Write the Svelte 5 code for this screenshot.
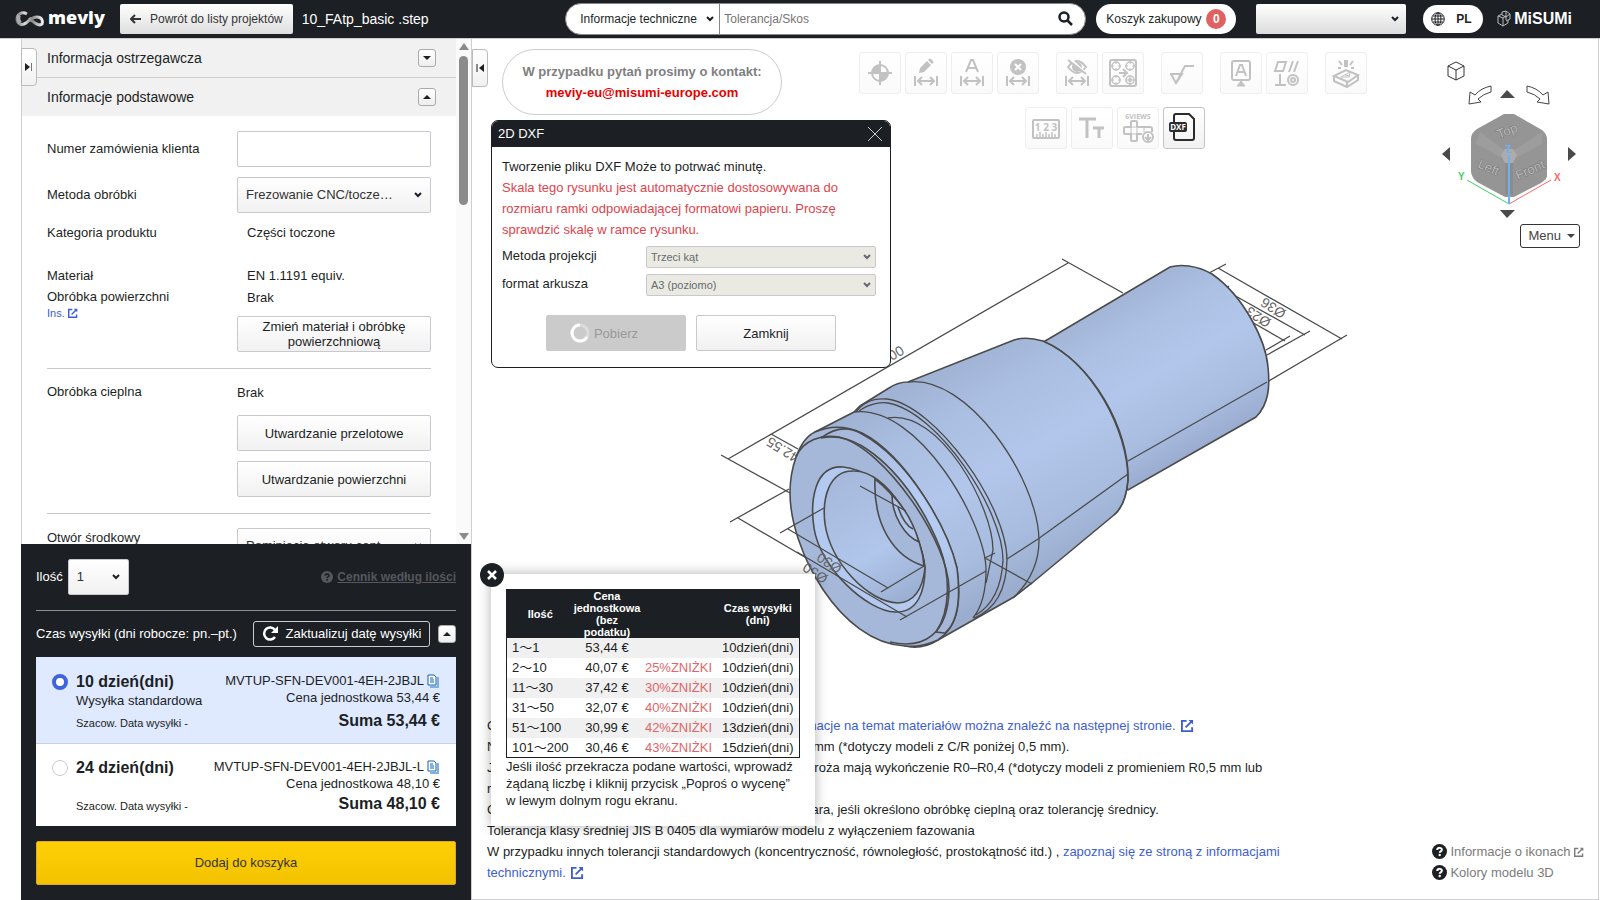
<script>
	let orderNumber = $state('');
	let method = $state('Frezowanie CNC/tocze…');
	let amount = $state('1');
	let selected = $state(0);
	let showDialog = $state(true);
	let showPrices = $state(true);

	const toolGroups = [
		['origin', 'pencil', 'letter', 'remove'],
		['hide', 'holes'],
		['rough'],
		['datum', 'geometric'],
		['engrave']
	];
	const toolGroups2 = ['ruler', 'text', 'views', 'dxf'];

	const toolNames = {
		origin: 'Punkt bazowy',
		pencil: 'Edytuj wymiar',
		letter: 'Opis wymiaru',
		remove: 'Usuń wymiar',
		hide: 'Ukryj wymiar',
		holes: 'Grupa otworów',
		rough: 'Chropowatość',
		datum: 'Baza',
		geometric: 'Tolerancja geometryczna',
		engrave: 'Grawerowanie',
		ruler: 'Jednostki',
		text: 'Rozmiar tekstu',
		views: '6 widoków',
		dxf: '2D DXF'
	};

	const offers = [
		{ days: '10 dzień(dni)', note: 'Wysyłka standardowa', code: 'MVTUP-SFN-DEV001-4EH-2JBJL', price: '53,44 €' },
		{ days: '24 dzień(dni)', note: '', code: 'MVTUP-SFN-DEV001-4EH-2JBJL-L', price: '48,10 €' }
	];

	const prices = [
		['1～1', '53,44 €', '', '10dzień(dni)'],
		['2～10', '40,07 €', '25%ZNIŻKI', '10dzień(dni)'],
		['11～30', '37,42 €', '30%ZNIŻKI', '10dzień(dni)'],
		['31～50', '32,07 €', '40%ZNIŻKI', '10dzień(dni)'],
		['51～100', '30,99 €', '42%ZNIŻKI', '13dzień(dni)'],
		['101～200', '30,46 €', '43%ZNIŻKI', '15dzień(dni)']
	];
</script>

{#snippet chevron()}
	<svg class="chevron" width="8" height="6" viewBox="0 0 8 6"><path d="M1 1l3 3 3-3" fill="none" stroke="currentColor" stroke-width="2" /></svg>
{/snippet}

{#snippet external(size)}
	<svg class="external" width={size} height={size} viewBox="0 0 14 14" fill="none" stroke="currentColor" stroke-width="2">
		<path d="M6 2H1v11h11V9M5 9l7-7" /><path d="M8 1h5v5z" fill="currentColor" stroke="none" />
	</svg>
{/snippet}

{#snippet help()}
	<svg class="help" width="15" height="15" viewBox="0 0 15 15">
		<circle cx="7.5" cy="7.5" r="7.5" fill="currentColor" />
		<path class="mark" d="M5.2 6c0-3 4.7-2.6 4.7-.2 0 1.6-2.2 1.5-2.2 3" fill="none" stroke-width="2" />
		<circle class="dot" cx="7.7" cy="11" r="1.2" />
	</svg>
{/snippet}

{#snippet span()}
	<path d="M10 24v10M32 24v10M14 29h14" /><path d="M17 25l-4 4 4 4M25 25l4 4-4 4" />
{/snippet}

{#snippet icon(name)}
	<svg width="40" height="40" viewBox="1 1 40 40" fill="none" stroke="currentColor" stroke-width="2">
		{#if name === 'origin'}
			<circle cx="21" cy="21" r="8" /><path d="M21 9v24M9 21h24" />
			<path d="M21 21V13a8 8 0 0 0-8 8zM21 21v8a8 8 0 0 0 8-8z" fill="currentColor" stroke="none" />
		{:else if name === 'pencil'}
			{@render span()}
			<path d="M14 21l1-5 7-7 4 4-7 7zM23 8l1-1q1-1 2 0l2 2q1 1 0 2l-1 1z" fill="currentColor" stroke="none" />
		{:else if name === 'letter'}
			{@render span()}
			<path d="M15 20l5-12h2l5 12M17 16h8" />
		{:else if name === 'remove'}
			{@render span()}
			<circle cx="21" cy="15" r="8" fill="currentColor" stroke="none" />
			<path d="M18 12l6 6M24 12l-6 6" stroke="#fff" />
		{:else if name === 'hide'}
			{@render span()}
			<path d="M12 15q9-12 18 0-9 12-18 0z" /><circle cx="21" cy="15" r="4" fill="currentColor" />
			<path d="M13 6l17 16" stroke="#fff" stroke-width="3" /><path d="M12 8l18 14" />
		{:else if name === 'holes'}
			<rect x="8" y="8" width="26" height="26" rx="2" />
			{#each [[14, 14], [28, 14], [14, 28], [28, 28]] as [cx, cy]}
				<circle {cx} {cy} r="4" stroke-width="1.5" /><path d="M{cx - 5} {cy}h3m4 0h3M{cx} {cy - 5}v3m0 4v3" stroke-width="1" />
			{/each}
			<circle cx="28" cy="28" r="1" />
			<path d="M17 21h7M21 17l4 4-4 4" />
		{:else if name === 'rough'}
			<path d="M9 22h12l-6 9-5-9M15 31l9-17h9" />
		{:else if name === 'datum'}
			<rect x="12" y="9" width="18" height="19" rx="2" /><path d="M16 24l4-11h2l4 11M18 20h6" />
			<path d="M21 28v3M21 29l4 5h-8z" fill="currentColor" stroke-width="1" />
		{:else if name === 'geometric'}
			<path d="M12 10h8l-3 9h-8zM27 9l-4 11M32 9l-4 11M14 22v11M9 33h11" />
			<circle cx="27" cy="28" r="5" /><circle cx="27" cy="28" r="2" />
		{:else if name === 'engrave'}
			<path d="M9 24l12-6 12 5-10 7zM9 24v5l13 6 11-7v-5M22 30v5" />
			<path d="M16 25l9-5-1 5zM20 23l5 1" stroke-width="1" />
			<path d="M21 8v7" stroke-width="4" /><path d="M14 9l3 4M28 9l-3 4M13 16h3M26 16h3" />
		{:else if name === 'ruler'}
			<rect x="8" y="13" width="26" height="18" rx="1" />
			<path d="M12 30v-3M15 30v-5M18 30v-3M21 30v-5M24 30v-3M27 30v-5M30 30v-3" stroke-width="1.5" />
			<text x="21" y="24" font-size="10" text-anchor="middle">1 2 3</text>
		{:else if name === 'text'}
			<path d="M8 12h17M16 12v19" stroke-width="3" /><path d="M22 21h11M28 21v10" stroke-width="3" />
		{:else if name === 'views'}
			<text x="21" y="12" font-size="7" text-anchor="middle">6VIEWS</text>
			<path d="M20 20v-5q0-1-1-1h-4q-1 0-1 1v5H8q-1 0-1 1v5q0 1 1 1h6v6q0 1 1 1h4q1 0 1-1v-6h5M20 20h13q2 0 2 2v3" />
			<path d="M14 20v7M20 20v7M14 20h6M14 27h6M27 21v4" stroke-width="1" />
			<circle cx="31" cy="30" r="5" fill="#fff" /><path d="M31 27v5M28 30l3 3 3-3" />
		{:else}
			<path d="M11 15V9q0-2 2-2h13l5 5v19q0 2-2 2H13q-2 0-2-2v-6" />
			<rect x="6" y="15" width="18" height="10" rx="2" fill="currentColor" stroke="none" />
			<text x="15" y="23" font-size="8" text-anchor="middle" class="inverse">DXF</text>
		{/if}
	</svg>
{/snippet}

<div class="page">
	<header>
		<a class="logo" href="/" aria-label="meviy">
			<svg width="29" height="16" viewBox="0 0 29 16" fill="none">
				<defs>
					<linearGradient id="loop"><stop offset="0" stop-color="#777" /><stop offset=".3" stop-color="#ddd" /><stop offset=".6" stop-color="#888" /><stop offset="1" stop-color="#eee" /></linearGradient>
				</defs>
				<path d="M12 3C7 0 2 3 2 8s5 7 9 4 6-6 11-6 6 4 5 7c-2 2-7 0-13-6" stroke="url(#loop)" stroke-width="3" />
				<path d="M4 4q-2 4 1 8" stroke="#aaa" stroke-width="4" />
			</svg>
			<span>meviy</span>
		</a>
		<button class="back">
			<svg width="12" height="10" viewBox="0 0 12 10" fill="none" stroke="currentColor" stroke-width="2"><path d="M5 1L1 5l4 4M1 5h10" /></svg>
			Powrót do listy projektów
		</button>
		<span class="file">10_FAtp_basic .step</span>
		<div class="search">
			<span class="select-box">
				<select aria-label="Zakres wyszukiwania"><option>Informacje techniczne</option></select>
				{@render chevron()}
			</span>
			<input type="text" placeholder="Tolerancja/Skos" aria-label="Szukaj" />
			<button aria-label="Szukaj">
				<svg width="15" height="15" viewBox="0 0 15 15" fill="none" stroke="currentColor" stroke-width="2.5"><circle cx="6" cy="6" r="4.5" /><path d="M9 9l5 5" /></svg>
			</button>
		</div>
		<button class="cart">Koszyk zakupowy <b>0</b></button>
		<span class="select-box account">
			<select aria-label="Konto"><option></option></select>
			{@render chevron()}
		</span>
		<button class="lang">
			<svg width="14" height="14" viewBox="0 0 14 14" fill="none" stroke="currentColor"><circle cx="7" cy="7" r="6.3" /><ellipse cx="7" cy="7" rx="3" ry="6.3" /><path d="M7 1v12M1 7h12M2 4h10M2 10h10" /></svg>
			PL
		</button>
		<a class="misumi" href="/misumi">
			<svg width="14" height="17" viewBox="0 0 14 17" fill="none" stroke="#bbb"><path d="M1 6l5 2v8l-5-3zM6 8l3-2M6 16l5-3v-3M5 5V2l4-1v9M9 1l4 3v5l-4 2M5 5l4 2 4-3M1 6l4-2" /></svg>
			<span>MiSUMi</span>
		</a>
	</header>

	<main>
		<aside>
			<div class="panel">
				<button class="fold" aria-label="Zwiń panel">
					<svg width="8" height="8" viewBox="0 0 8 8"><path d="M0 0l5 4-5 4z" fill="currentColor" /><path d="M6.5 0v8" stroke="#777" /></svg>
				</button>
				<div class="scroll">
					<section class="heading">
						<h2>Informacja ostrzegawcza</h2>
						<button class="toggle" aria-label="Rozwiń"><i class="tri down"></i></button>
					</section>
					<section class="heading">
						<h2>Informacje podstawowe</h2>
						<button class="toggle" aria-label="Zwiń"><i class="tri up"></i></button>
					</section>
					<div class="form">
						<div class="row">
							<label for="order">Numer zamówienia klienta</label>
							<input id="order" type="text" bind:value={orderNumber} />
						</div>
						<div class="row">
							<label for="method">Metoda obróbki</label>
							<span class="select-box field">
								<select id="method" bind:value={method}><option>Frezowanie CNC/tocze…</option></select>
								{@render chevron()}
							</span>
						</div>
						<div class="row text"><span>Kategoria produktu</span><span class="value">Części toczone</span></div>
						<div class="row material">
							<div>
								<p>Materiał</p>
								<p>Obróbka powierzchni</p>
								<a href="/ins">Ins. {@render external(10)}</a>
							</div>
							<div>
								<p class="value">EN 1.1191 equiv.</p>
								<p class="value">Brak</p>
								<button class="btn">Zmień materiał i obróbkę powierzchniową</button>
							</div>
						</div>
						<hr />
						<div class="row heat">
							<p>Obróbka cieplna</p>
							<div>
								<p>Brak</p>
								<button class="btn">Utwardzanie przelotowe</button>
								<button class="btn">Utwardzanie powierzchni</button>
							</div>
						</div>
						<hr />
						<div class="row center-hole">
							<label for="hole">Otwór środkowy</label>
							<span class="select-box field">
								<select id="hole"><option>Pominięcie otworu cent…</option></select>
								{@render chevron()}
							</span>
						</div>
					</div>
				</div>
				<div class="bar">
					<i class="tri up"></i>
					<i class="thumb"></i>
					<i class="tri down"></i>
				</div>
			</div>

			<div class="order">
				<div class="amount">
					<label for="amount">Ilość</label>
					<span class="select-box field">
						<select id="amount" bind:value={amount}><option>1</option><option>2</option></select>
						{@render chevron()}
					</span>
					<a href="/cennik">{@render help()}<u>Cennik według ilości</u></a>
				</div>
				<div class="shipping">
					<span>Czas wysyłki (dni robocze: pn.–pt.)</span>
					<button class="refresh">
						<svg width="17" height="16" viewBox="0 0 17 16" fill="none" stroke="currentColor" stroke-width="2.5"><path d="M13 11a6 6 0 1 1 0-7" /><path d="M16 0v7H9z" fill="currentColor" stroke="none" /></svg>
						Zaktualizuj datę wysyłki
					</button>
					<button class="toggle" aria-label="Zwiń"><i class="tri up"></i></button>
				</div>
				<div class="offers">
					{#each offers as offer, i}
						<label class="offer" class:active={selected === i}>
							<input type="radio" name="offer" value={i} bind:group={selected} />
							<span class="when">
								<b>{offer.days}</b>
								<span>{offer.note}</span>
								<small>Szacow. Data wysyłki -</small>
							</span>
							<span class="cost">
								<span>{offer.code}
									<svg class="copy" width="13" height="14" viewBox="0 0 13 14" fill="none"><path d="M3 13h8V3" stroke="#7fb0e0" stroke-width="2" /><path d="M1 1h6l2 2v8H1z" fill="#fff" stroke="#0a62b5" /><path d="M3 4h3M3 6h4M3 8h4" stroke="#0a62b5" /></svg>
								</span>
								<span>Cena jednostkowa {offer.price}</span>
								<b>Suma {offer.price}</b>
							</span>
						</label>
					{/each}
				</div>
				<button class="add">Dodaj do koszyka</button>
			</div>
		</aside>

		<div class="viewer">
			<svg class="model" width="680" height="420" viewBox="700 240 680 420" role="img" aria-label="Model 3D">
				<defs>
					<linearGradient id="shaft" gradientUnits="userSpaceOnUse" x1="1106" y1="304" x2="1192" y2="453">
						<stop offset="0" stop-color="#a2b5d7" /><stop offset=".22" stop-color="#abc0e3" /><stop offset=".5" stop-color="#b1c6ea" /><stop offset=".8" stop-color="#a9bde0" /><stop offset="1" stop-color="#9aadd0" />
					</linearGradient>
					<linearGradient id="body" gradientUnits="userSpaceOnUse" x1="930" y1="375" x2="1040" y2="575">
						<stop offset="0" stop-color="#a0b3d5" /><stop offset=".2" stop-color="#aabee1" /><stop offset=".5" stop-color="#b1c6ea" /><stop offset=".8" stop-color="#a8bcdf" /><stop offset="1" stop-color="#9aadce" />
					</linearGradient>
					<linearGradient id="bore" gradientUnits="userSpaceOnUse" x1="835" y1="480" x2="905" y2="600">
						<stop offset="0" stop-color="#a6b9dc" /><stop offset=".6" stop-color="#b0c6ea" /><stop offset="1" stop-color="#9bafd2" />
					</linearGradient>
					<linearGradient id="chamfer" gradientUnits="userSpaceOnUse" x1="840" y1="430" x2="940" y2="600">
						<stop offset="0" stop-color="#a5b8da" /><stop offset=".5" stop-color="#b8cdf4" /><stop offset=".8" stop-color="#b4c9ee" /><stop offset="1" stop-color="#a5b8da" />
					</linearGradient>
				</defs>
				<g class="dims">
					<path d="M1062 259l61 34M1068 263L728 459M721 455l69 38M771 434l27 15" />
					<path d="M1209 273l17-9M1218 268l124 71M1347 335l-80 47M1229 286l-4 3M1232 294l73 41M1310 331l-43 24M1250 321l35 20M1290 336l-24 14" />
					<path d="M730 522l59-33M738 518l70 41" />
					<text transform="translate(800 455) rotate(212)">42.55</text>
					<text transform="translate(885 365) rotate(-30)">100</text>
					<text transform="translate(1287 311) rotate(212)">Ø36</text>
					<text transform="translate(1272 320) rotate(212)">Ø23</text>
				</g>
				<g class="solid">
					<path fill="url(#shaft)" d="M1030 350L1170 267C1180 264 1196 265 1212 274C1245 297 1266 342 1268 367C1270 386 1269 404 1256 417L1128 490z" />
					<path fill="url(#body)" d="M815 432L854 412L860 406L889 388Q898 382 908 382L1014 340Q1026 336 1043 341C1092 362 1128 430 1128 480Q1126 505 1114 515L1032 583L1014 597L938 640Q922 650 905 646L815 460z" />
					<path fill="#a5b8da" d="M815 432C798 440 790 470 790 493C790 550 840 643 905 646Q920 648 938 640C960 625 961 598 957 568C946 525 905 455 862 433Q838 422 815 432z" />
					<path fill="url(#chamfer)" stroke="none" d="M862 434C910 460 948 530 957 568C961 600 958 622 945 633L936 632C951 610 950 575 940 548C925 510 898 468 862 446Q842 434 821 438Q842 422 862 434z" />
					<path fill="none" d="M796 457C803 440 822 434 839 437C885 448 950 544 949 590C948 633 925 650 890 642" />
					<path fill="#b4c9ef" d="M843 467C814 465 810 502 814 528C820 568 867 611 895 612C919 613 925 589 925 568C922 531 884 470 843 467z" />
					<path fill="url(#bore)" d="M854 471C828 470 822 500 825 524C831 563 868 602 898 603C917 602 923 586 925 568C920 528 888 471 854 471z" />
					<path fill="#a5b8da" d="M875 479C873 525 894 557 924 566C922 535 900 498 875 479z" />
					<path fill="#b0c5e9" d="M892 495C892 516 905 536 919 542C913 521 902 505 892 495z" />
					<path fill="none" d="M898 507Q904 525 913 529" />
				</g>
				<g class="edges">
					<path d="M908 382C967 374 1038 478 1039 540Q1039 573 1014 597" />
					<path d="M1043 341C1092 362 1130 430 1128 480Q1126 505 1114 515" />
					<path d="M856 412C864 401 876 398 887 399C935 405 1007 505 1007 560Q1006 605 974 618" />
					<path d="M859 411C870 403 882 402 888 403C938 412 1003 510 1003 560Q1001 600 976 615" />
					<path d="M888 418C940 409 993 507 993 550L986 583" />
					<path d="M854 412C919 404 986 524 986 570Q986 602 973 618" />
				</g>
				<g class="dims">
					<path d="M1267 382L1128 461M1128 474L1038 539L1007 559M995 553l-10 5M985 558l47 26M986 571l-86 49M797 552l110 65M780 533l44-25M788 529l100 59M881 592l43-26M860 486l46 25" />
					<text transform="translate(843 566) rotate(212)">Ø30</text>
					<text transform="translate(829 576) rotate(212)">Ø50</text>
				</g>
			</svg>

			<div class="top">
				<button class="fold" aria-label="Rozwiń panel">
					<svg width="8" height="8" viewBox="0 0 8 8"><path d="M8 0L3 4l5 4z" fill="currentColor" /><path d="M1 0v8" stroke="currentColor" /></svg>
				</button>
				<div class="contact">
					W przypadku pytań prosimy o kontakt:
					<a href="mailto:meviy-eu@misumi-europe.com">meviy-eu@misumi-europe.com</a>
				</div>
				<div class="tools">
					<div class="tool-row">
						{#each toolGroups as group}
							<div class="group">
								{#each group as name}
									<button class="tool" disabled aria-label={toolNames[name]}>{@render icon(name)}</button>
								{/each}
							</div>
						{/each}
					</div>
					<div class="group second">
						{#each toolGroups2 as name}
							<button class="tool" disabled={name !== 'dxf'} aria-label={toolNames[name]} onclick={() => (showDialog = true)}>{@render icon(name)}</button>
						{/each}
					</div>
				</div>
				<div class="view">
					<svg width="144" height="164" viewBox="1436 58 144 164" fill="none" role="img" aria-label="Orientacja widoku">
						<path d="M1456 62l8 4v10l-8 4-8-4V66zM1448 66l8 4 8-4M1456 70v10" stroke="#333" />
						<path d="M1491 86q-10 2-16 9l-5-3-1 12 12-2-3-3q5-5 13-7zM1527 86q10 2 16 9l5-3 1 12-12-2 3-3q-5-5-13-7z" stroke="#444" />
						<path d="M1500 98l7-8 8 8zM1500 210l7 8 8-8zM1450 147l-8 7 8 7zM1568 147l8 7-8 7z" fill="#4a4a4a" />
						<path d="M1504 114h10l28 16q5 4 5 9v37q0 3-6 7l-27 14h-9l-28-15q-5-4-6-10v-33q0-6 6-10z" fill="#959595" />
						<path d="M1480 132l24 18-2 8-26-14zM1542 132l-28 18 2 8 26-14z" fill="#9d9d9d" />
						<path d="M1505 162h8v33h-8z" fill="#8c8c8c" /><path d="M1505 149h8l4 6-4 8h-8l-4-8z" fill="#acacac" />
						<g class="faces">
							<text transform="translate(1499 139) rotate(-22)">Top</text>
							<text transform="translate(1477 167) rotate(24)">Left</text>
							<text transform="translate(1518 180) rotate(-24)">Front</text>
						</g>
						<path d="M1509 204l-42-24" stroke="#3fcf62" /><path d="M1509 204l42-24" stroke="#f66" />
						<path d="M1509 204v-49" stroke="#6fb0f3" stroke-width="2" />
						<g class="axes">
							<text x="1505" y="153" fill="#6fb0f3">Z</text>
							<text x="1458" y="180" fill="#3fcf62">Y</text>
							<text x="1554" y="181" fill="#f66">X</text>
						</g>
					</svg>
					<button class="menu">Menu <i class="tri down"></i></button>
				</div>
			</div>

			{#if showDialog}
				<div class="dialog" role="dialog" aria-label="2D DXF">
					<div class="dialog-head">
						2D DXF
						<button aria-label="Zamknij okno" onclick={() => (showDialog = false)}>
							<svg width="16" height="16" viewBox="0 0 16 16" stroke="currentColor"><path d="M1 1l14 14M15 1L1 15" /></svg>
						</button>
					</div>
					<div class="dialog-body">
						<p>Tworzenie pliku DXF Może to potrwać minutę.</p>
						<p class="warn">Skala tego rysunku jest automatycznie dostosowywana do rozmiaru ramki odpowiadającej formatowi papieru. Proszę sprawdzić skalę w ramce rysunku.</p>
						<div class="option">
							<label for="projection">Metoda projekcji</label>
							<span class="select-box"><select id="projection" disabled><option>Trzeci kąt</option></select>{@render chevron()}</span>
						</div>
						<div class="option">
							<label for="sheet">format arkusza</label>
							<span class="select-box"><select id="sheet" disabled><option>A3 (poziomo)</option></select>{@render chevron()}</span>
						</div>
						<div class="actions">
							<button class="btn" disabled>
								<svg width="20" height="20" viewBox="0 0 20 20" fill="none" stroke-width="3"><circle cx="10" cy="10" r="8" stroke="#dcdcdc" /><path d="M10 2a8 8 0 1 0 7 12" stroke="#fff" /></svg>
								Pobierz
							</button>
							<button class="btn" onclick={() => (showDialog = false)}>Zamknij</button>
						</div>
					</div>
				</div>
			{/if}

			{#if showPrices}
				<div class="prices">
					<button class="close" aria-label="Zamknij cennik" onclick={() => (showPrices = false)}>
						<svg width="10" height="10" viewBox="0 0 10 10" stroke="currentColor" stroke-width="2.5"><path d="M1 1l8 8M9 1L1 9" /></svg>
					</button>
					<table>
						<thead>
							<tr><th>Ilość</th><th>Cena jednostkowa (bez podatku)</th><th></th><th>Czas wysyłki (dni)</th></tr>
						</thead>
						<tbody>
							{#each prices as [range, price, discount, time]}
								<tr><td>{range}</td><td>{price}</td><td class="discount">{discount}</td><td>{time}</td></tr>
							{/each}
						</tbody>
					</table>
					<p>Jeśli ilość przekracza podane wartości, wprowadź żądaną liczbę i kliknij przycisk „Poproś o wycenę” w lewym dolnym rogu ekranu.</p>
				</div>
			{/if}

			<div class="bottom">
				<div class="notes">
					<p>Gatunek materiału zgodnie z normą. Szczegółowe <a href="/materialy">informacje na temat materiałów można znaleźć na następnej stronie. {@render external(13)}</a></p>
					<p>Nieokreślone krawędzie tworzą fazowanie C0,1 do C0,5 mm (*dotyczy modeli z C/R poniżej 0,5 mm).</p>
					<p>Jeśli nie określono inaczej, krawędzie konturowe oraz naroża mają wykończenie R0–R0,4 (*dotyczy modeli z promieniem R0,5 mm lub równym).</p>
					<p>Gwint wewnętrzny może też wymagać ponownego wymiara, jeśli określono obróbkę cieplną oraz tolerancję średnicy.</p>
					<p>Tolerancja klasy średniej JIS B 0405 dla wymiarów modelu z wyłączeniem fazowania</p>
					<p>W przypadku innych tolerancji standardowych (koncentryczność, równoległość, prostokątność itd.) , <a href="/tolerancje">zapoznaj się ze stroną z informacjami technicznymi. {@render external(13)}</a></p>
				</div>
				<div class="links">
					<a href="/ikony">{@render help()}Informacje o ikonach {@render external(10)}</a>
					<a href="/kolory">{@render help()}Kolory modelu 3D</a>
				</div>
			</div>
		</div>
	</main>
</div>

<style>
	:global(body) {
		margin: 0;
	}

	.page {
		display: flex;
		flex-direction: column;
		height: 100vh;
		overflow: hidden;
		background: #fff;
		color: #1c1f24;
		font: 13px/20px 'Liberation Sans', Arial, 'Noto Sans CJK JP', sans-serif;
	}

	.page * {
		box-sizing: border-box;
	}

	button,
	input,
	select {
		margin: 0;
		padding: 0;
		border: 0;
		background: none;
		color: inherit;
		font: inherit;
	}

	select {
		appearance: none;
		width: 100%;
		height: 100%;
		opacity: 1;
	}

	p,
	h2 {
		margin: 0;
	}

	a {
		color: #3e5ecf;
		text-decoration: none;
	}

	svg {
		flex: none;
	}

	.select-box {
		position: relative;
		display: flex;
	}

	.chevron {
		position: absolute;
		right: 8px;
		top: calc(50% - 3px);
		pointer-events: none;
	}

	.tri {
		flex: none;
		border: 0 solid transparent;
		border-width: 0 4px;
	}

	.tri.up {
		border-bottom: 4px solid currentColor;
	}

	.tri.down {
		border-top: 4px solid currentColor;
	}

	/* header */
	header {
		display: flex;
		align-items: center;
		flex: none;
		height: 39px;
		padding: 0 28px 1px 15px;
		background: #1c1f24;
		border-bottom: 1px solid #cdcdd2;
		color: #fff;
		font-size: 12px;
	}

	.logo {
		display: flex;
		align-items: center;
		gap: 4px;
		width: 105px;
		color: #fff;
		font: 800 18px/24px 'Open Sans', sans-serif;
	}

	.logo span {
		margin-top: -4px;
	}

	.back {
		display: flex;
		align-items: center;
		gap: 8px;
		height: 30px;
		padding: 0 10px;
		border-radius: 2px;
		background: linear-gradient(#fff, #dedede);
		color: #333;
		white-space: nowrap;
	}

	.file {
		margin-left: 9px;
		font-size: 14px;
		white-space: nowrap;
	}

	.search {
		display: flex;
		align-items: center;
		width: 521px;
		height: 32px;
		margin-left: auto;
		border: 1px solid #888;
		border-radius: 16px;
		background: #fff;
		color: #1c1f24;
	}

	.search .select-box {
		width: 154px;
		height: 30px;
		padding-left: 14px;
		border-right: 1px solid #888;
	}

	.search .chevron {
		right: 5px;
	}

	.search input {
		flex: 1;
		height: 28px;
		padding-left: 4px;
		outline: 0;
	}

	.search input::placeholder {
		color: #757575;
	}

	.search button {
		display: flex;
		margin-right: 12px;
	}

	.cart {
		display: flex;
		align-items: center;
		justify-content: space-between;
		width: 140px;
		height: 30px;
		margin-left: 10px;
		padding: 0 10px;
		border-radius: 15px;
		background: #fff;
		color: #1c1f24;
	}

	.cart b {
		width: 20px;
		border-radius: 10px;
		background: #df6161;
		color: #fff;
	}

	.account {
		width: 150px;
		height: 30px;
		margin-left: 20px;
		border-radius: 2px;
		background: linear-gradient(#fff, #dcdcdc);
		color: #1c1f24;
	}

	.account .chevron {
		right: 7px;
	}

	.lang {
		display: flex;
		align-items: center;
		gap: 11px;
		width: 60px;
		height: 28px;
		margin-left: 17px;
		padding-left: 8px;
		border-radius: 14px;
		background: #fff;
		color: #1c1f24;
		font-weight: bold;
	}

	.misumi {
		display: flex;
		align-items: center;
		gap: 3px;
		margin-left: 14px;
		color: #fff;
		font: bold 16px/20px 'Liberation Sans', Arial, sans-serif;
	}

	main {
		display: flex;
		flex: 1;
		min-height: 0;
	}

	/* left column */
	aside {
		display: flex;
		flex-direction: column;
		flex: none;
		width: 451px;
		margin-left: 21px;
		border-right: 1px solid #cdcdd2;
	}

	.panel {
		position: relative;
		display: flex;
		flex: 1;
		min-height: 0;
		border-left: 1px solid #cdcdd2;
	}

	.fold {
		position: absolute;
		z-index: 1;
		top: 9px;
		left: -1px;
		display: flex;
		align-items: center;
		justify-content: center;
		width: 16px;
		height: 38px;
		border: 1px solid #bbb;
		border-radius: 0 4px 4px 0;
		background: linear-gradient(#fff, #f1f1f1);
	}

	.scroll {
		flex: 1;
		overflow: hidden;
	}

	.heading {
		display: flex;
		align-items: center;
		justify-content: space-between;
		height: 39px;
		padding: 0 20px 0 25px;
		border-bottom: 1px solid #cdcdcd;
		background: #f1f1f1;
	}

	.heading + .heading {
		height: 38px;
		border: 0;
	}

	h2 {
		font-size: 14px;
		font-weight: normal;
	}

	.toggle {
		display: flex;
		align-items: center;
		justify-content: center;
		width: 18px;
		height: 18px;
		border: 1px solid #aaa;
		border-radius: 3px;
		background: linear-gradient(#fff, #eee);
		color: #1c1f24;
	}

	.form {
		padding: 15px 25px 0;
	}

	.row {
		display: flex;
		align-items: center;
		justify-content: space-between;
		margin-bottom: 10px;
	}

	.row > :last-child {
		width: 194px;
	}

	.row input,
	.field,
	.btn {
		height: 36px;
		border: 1px solid #c8c8ce;
		border-radius: 2px;
		background: #fff;
	}

	.field,
	.btn {
		background: linear-gradient(#fff, #f1f1f1);
	}

	.field select {
		padding: 0 8px;
		color: #333;
	}

	.value {
		padding-left: 10px;
	}

	.row.text {
		margin-bottom: 22px;
	}

	.row.material,
	.row.heat {
		align-items: flex-start;
		margin: 0;
	}

	.row p {
		line-height: 21px;
	}

	.row p.value {
		line-height: 22px;
	}

	.material a {
		display: block;
		font-size: 11px;
		line-height: 12px;
	}

	.btn {
		display: block;
		width: 100%;
		line-height: 15px;
	}

	.material .btn {
		margin-top: 7px;
	}

	hr {
		height: 1px;
		margin: 16px 0 12px;
		border: 0;
		background: #c8c8c8;
	}

	.heat div p {
		line-height: 24px;
	}

	.heat .btn {
		margin-top: 10px;
	}

	.center-hole {
		align-items: flex-start;
		padding-top: 2px;
	}

	.bar {
		display: flex;
		flex-direction: column;
		align-items: center;
		width: 15px;
		padding: 4px 0;
		background: #fafafa;
		color: #8b8b8b;
	}

	.bar .tri {
		border-width: 0 5px;
	}

	.bar .tri.up {
		border-bottom-width: 7px;
	}

	.bar .tri.down {
		margin-top: auto;
		border-top-width: 7px;
	}

	.thumb {
		width: 9px;
		height: 149px;
		margin-top: 6px;
		border-radius: 5px;
		background: #8b8b8b;
	}

	.order {
		flex: none;
		padding: 15px;
		background: #1c1f24;
		color: #fff;
	}

	.amount {
		display: flex;
		align-items: center;
		gap: 5px;
		height: 52px;
		padding-bottom: 16px;
		border-bottom: 1px solid #8e8f92;
	}

	.amount .field {
		width: 61px;
		color: #1c1f24;
	}

	.amount a {
		display: flex;
		align-items: center;
		gap: 4px;
		margin-left: auto;
		color: #55585c;
		font-size: 12px;
		font-weight: bold;
	}

	.help {
		vertical-align: middle;
	}

	.help .mark {
		stroke: #fff;
	}

	.help .dot {
		fill: #fff;
	}

	.amount .mark {
		stroke: #1c1f24;
	}

	.amount .dot {
		fill: #1c1f24;
	}

	.amount .help {
		width: 12px;
		height: 12px;
	}

	.shipping {
		display: flex;
		align-items: center;
		justify-content: space-between;
		height: 46px;
	}

	.refresh {
		display: flex;
		align-items: center;
		gap: 7px;
		height: 26px;
		margin-left: 8px;
		padding: 0 8px;
		border: 1px solid #ccc;
		border-radius: 3px;
	}

	.offer {
		display: flex;
		height: 82px;
		padding: 14px 16px 0 16px;
		background: #fff;
		color: #1c1f24;
	}

	.offer.active {
		height: 87px;
		padding-top: 15px;
		border-bottom: 1px solid #cdd0d8;
		background: #dfe9ff;
	}

	.offer input {
		appearance: none;
		width: 16px;
		height: 16px;
		margin: 2px 8px 0 0;
		border: 1px solid #ccc;
		border-radius: 50%;
		background: #fff;
	}

	.offer input:checked {
		border: 4px solid #3e63dd;
	}

	.when,
	.cost {
		display: flex;
		flex-direction: column;
		line-height: 17px;
	}

	.cost {
		align-items: flex-end;
		margin-left: auto;
	}

	.when b,
	.cost b {
		font-size: 16px;
		line-height: 20px;
	}

	.when > span {
		height: 18px;
	}

	.when small {
		padding-top: 2px;
		font-size: 11px;
	}

	.active .when small {
		padding-top: 5px;
	}

	.cost b {
		padding-top: 2px;
	}

	.active .cost b {
		padding-top: 5px;
	}

	.copy {
		vertical-align: -3px;
	}

	.add {
		display: block;
		width: 100%;
		height: 44px;
		margin-top: 15px;
		border: 1px solid #e0a52c;
		border-radius: 2px;
		background: linear-gradient(#ffcf05, #f2c200);
		color: #333;
	}

	/* 3d area */
	.viewer {
		position: relative;
		display: flex;
		flex-direction: column;
		justify-content: space-between;
		flex: 1;
		border: solid #cdcdd2;
		border-width: 0 1px 1px 0;
		margin-right: 1px;
	}

	.viewer .fold {
		top: 10px;
		left: 0;
	}

	.model {
		position: absolute;
		top: 201px;
		left: 228px;
	}

	.dims path,
	.solid path,
	.edges path {
		stroke: #4b4b4b;
		stroke-width: 1.3;
	}

	.solid path {
		stroke-width: 1.6;
	}

	.edges path,
	.dims path {
		fill: none;
	}

	.dims text {
		fill: #666;
		font-size: 14px;
	}

	.top {
		position: relative;
		display: flex;
		align-items: flex-start;
		padding: 10px 18px 0 30px;
	}

	.contact {
		display: flex;
		flex-direction: column;
		align-items: center;
		justify-content: center;
		width: 280px;
		height: 66px;
		border: 1px solid #ccc;
		border-radius: 33px;
		color: #808080;
		font-weight: bold;
		line-height: 21px;
	}

	.contact a {
		color: #e60000;
	}

	.tools {
		display: flex;
		flex-direction: column;
		align-items: center;
		gap: 13px;
		margin: 3px auto 0;
		padding-left: 7px;
	}

	.tool-row {
		display: flex;
		gap: 17px;
	}

	.group {
		display: flex;
		gap: 4px;
	}

	.second {
		padding-left: 4px;
	}

	.tool {
		width: 42px;
		height: 42px;
		border: 1px solid #c4c4c4;
		border-radius: 3px;
		background: linear-gradient(#fff, #f1f1f1);
		color: #2b2b2b;
	}

	.tool:disabled {
		border-color: #eee;
		background: linear-gradient(#fff, #fafafa);
		color: #c2c2c2;
	}

	.tool svg {
		display: block;
	}

	.tool text {
		fill: currentColor;
		stroke: none;
		font-weight: bold;
		font-family: 'Open Sans', sans-serif;
	}

	.tool .inverse {
		fill: #fff;
	}

	.view {
		display: flex;
		flex-direction: column;
		align-items: flex-end;
		gap: 2px;
		margin-top: 9px;
	}

	.faces text {
		fill: #b8b8b8;
		stroke: #777;
		stroke-width: 1;
		paint-order: stroke;
		font-size: 13px;
	}

	.axes text {
		font-size: 10px;
		font-weight: bold;
	}

	.menu {
		display: flex;
		align-items: center;
		gap: 6px;
		height: 24px;
		padding: 0 4px 0 7px;
		border: 1px solid #333;
		border-radius: 3px;
		background: #fff;
		color: #444;
	}

	.dialog {
		position: absolute;
		top: 81px;
		left: 19px;
		width: 400px;
		overflow: hidden;
		border: 1px solid #1c1f24;
		border-radius: 7px;
		background: #fff;
	}

	.dialog-head {
		display: flex;
		align-items: center;
		justify-content: space-between;
		height: 26px;
		padding: 0 7px 0 6px;
		background: #1c1f24;
		color: #fff;
	}

	.dialog-head button {
		display: flex;
		color: #ccc;
	}

	.dialog-body {
		padding: 9px 10px 16px;
		line-height: 21px;
	}

	.warn {
		margin-bottom: 6px;
		color: #e0444b;
	}

	.option {
		display: flex;
		justify-content: space-between;
		align-items: flex-start;
		height: 28px;
		padding-right: 4px;
		line-height: 19px;
	}

	.option .select-box {
		width: 230px;
		height: 22px;
		border: 1px solid #c8c8ce;
		border-radius: 2px;
		background: #eaeae2;
		color: #666a70;
		font-size: 11px;
	}

	.option .chevron {
		right: 4px;
	}

	.option select {
		padding: 0 4px;
	}

	.actions {
		display: flex;
		justify-content: center;
		gap: 10px;
		padding-top: 13px;
	}

	.actions .btn {
		display: flex;
		align-items: center;
		justify-content: center;
		gap: 4px;
		width: 140px;
	}

	.actions .btn:disabled {
		padding-right: 24px;
		border-color: #cbcbcb;
		background: #cbcbcb;
		color: #999;
	}

	.prices {
		position: absolute;
		z-index: 1;
		bottom: 73px;
		left: 19px;
		width: 324px;
		padding: 15px 15px 17px;
		background: #fff;
		box-shadow: 0 0 12px rgba(0, 0, 0, 0.3);
		line-height: 17px;
	}

	.close {
		position: absolute;
		top: -11px;
		left: -11px;
		display: flex;
		align-items: center;
		justify-content: center;
		width: 24px;
		height: 24px;
		border-radius: 50%;
		background: #1c1f24;
		color: #fff;
	}

	table {
		width: 294px;
		border: 1px solid #1c1f24;
		border-collapse: collapse;
		table-layout: fixed;
	}

	th {
		height: 48px;
		padding: 0;
		background: #1c1f24;
		color: #fff;
		font-size: 11px;
		line-height: 12px;
	}

	th:nth-child(-n + 2) {
		width: 67px;
	}

	th:nth-child(3) {
		width: 76px;
	}

	td {
		height: 20px;
		padding: 0;
		text-align: center;
		white-space: nowrap;
	}

	td:first-child {
		padding-left: 5px;
		text-align: left;
	}

	tbody tr:nth-child(odd) {
		background: #f0f0f0;
	}

	.discount {
		color: #e0666a;
	}

	.bottom {
		display: flex;
		align-items: flex-end;
		justify-content: space-between;
		padding: 0 14px 16px 15px;
		line-height: 21px;
	}

	.notes {
		width: 806px;
	}

	.notes .external {
		margin-left: 2px;
		vertical-align: -2px;
	}

	.links {
		display: flex;
		flex-direction: column;
	}

	.links a {
		color: #7b7b7b;
	}

	.links .help {
		margin: -3px 3px 0 0;
		color: #1c1f24;
	}

	.links .external,
	.material .external {
		vertical-align: -1px;
	}
</style>
